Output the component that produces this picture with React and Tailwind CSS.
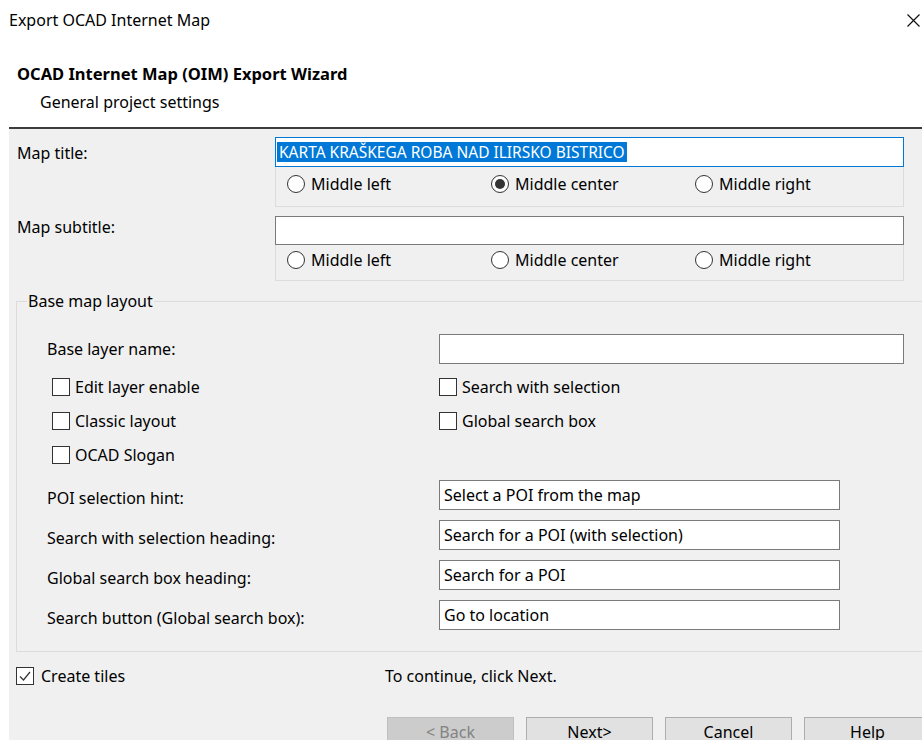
import React from 'react';

const Radio = ({ checked, label }) => (
  <div className="flex items-center gap-[6px] w-[204px]">
    <span className="w-[18px] h-[18px] rounded-full border border-[#333] bg-white flex items-center justify-center shrink-0">
      {checked && <span className="w-[10px] h-[10px] rounded-full bg-[#333]" />}
    </span>
    <span className="leading-[18px]">{label}</span>
  </div>
);

const Checkbox = ({ checked, label }) => (
  <div className="flex items-center gap-[5px]">
    <span className="w-[18px] h-[18px] border border-[#333] bg-white flex items-center justify-center shrink-0">
      {checked && (
        <svg width="14" height="14" viewBox="0 0 14 14">
          <path d="M2 7.5 L5.5 11 L12 3" fill="none" stroke="#333" strokeWidth="1.2" />
        </svg>
      )}
    </span>
    {label && <span className="leading-[18px]">{label}</span>}
  </div>
);

const TextBox = ({ value, className = '' }) => (
  <div className={`h-[30px] border border-[#7a7a7a] bg-white flex items-center pl-[4px] ${className}`}>
    {value}
  </div>
);

const RadioPanel = ({ selected, className = '' }) => (
  <div className={`border-x border-b border-[#dcdcdc] flex items-start pl-[11px] ${className}`}>
    <Radio label="Middle left" checked={selected === 'left'} />
    <Radio label="Middle center" checked={selected === 'center'} />
    <Radio label="Middle right" checked={selected === 'right'} />
  </div>
);

const Button = ({ children, disabled }) => (
  <div
    className={
      disabled
        ? 'w-[127px] h-[30px] border border-[#bfbfbf] bg-[#cccccc] text-[#838383] flex items-center justify-center shrink-0'
        : 'w-[127px] h-[30px] border border-[#adadad] bg-[#e1e1e1] flex items-center justify-center shrink-0'
    }
  >
    {children}
  </div>
);

const searchFields = [
  ['POI selection hint:', 'Select a POI from the map'],
  ['Search with selection heading:', 'Search for a POI (with selection)'],
  ['Global search box heading:', 'Search for a POI'],
  ['Search button (Global search box):', 'Go to location'],
];

export default function App() {
  return (
    <div className="w-[922px] h-[740px] overflow-hidden bg-white text-black text-[16px] font-['Noto_Sans',sans-serif]">
      {/* window header */}
      <div className="h-[127px]">
        <div className="h-[40px] flex items-center justify-between pl-[9px] pr-[2px]">
          <span>Export OCAD Internet Map</span>
          <svg width="13" height="13" viewBox="0 0 13 13">
            <path d="M0.5 0.5 L12.5 12.5 M12.5 0.5 L0.5 12.5" stroke="#111" strokeWidth="1.2" />
          </svg>
        </div>
        <div className="mt-[24px] pl-[17px] leading-[20px] font-bold text-[16.5px]">OCAD Internet Map (OIM) Export Wizard</div>
        <div className="mt-[8px] pl-[40px] leading-[20px]">General project settings</div>
      </div>

      <div className="ml-[9px] h-[613px] border-t-2 border-[#3c3c3c] bg-[#f0f0f0] pt-[8px]">
        {/* map title */}
        <div className="flex">
          <div className="w-[266px] pl-[8px] leading-[32px]">Map title:</div>
          <div className="w-[629px]">
            <div className="h-[30px] border border-[#0078d7] bg-white flex items-center pl-[1px] text-[15.5px]">
              <span className="bg-[#0078d7] text-white px-[2px] leading-[20px]">KARTA KRAŠKEGA ROBA NAD ILIRSKO BISTRICO</span>
            </div>
            <RadioPanel selected="center" className="h-[40px] pt-[8px]" />
          </div>
        </div>

        {/* map subtitle */}
        <div className="flex mt-[9px]">
          <div className="w-[266px] pl-[8px] leading-[22px]">Map subtitle:</div>
          <div className="w-[629px]">
            <div className="h-[29px] border border-[#7a7a7a] bg-white" />
            <RadioPanel className="h-[36px] pt-[6px]" />
          </div>
        </div>

        {/* base map layout group */}
        <fieldset className="ml-[7px] mt-[10px] w-[930px] border-l border-t border-b border-[#dcdcdc] pb-[21px]">
          <legend className="ml-[10px] px-[1px] leading-[20px]">Base map layout</legend>

          <div className="pl-[30px]">
            <div className="flex mt-[23px]">
              <div className="w-[392px] leading-[30px]">Base layer name:</div>
              <div className="w-[465px] h-[30px] border border-[#7a7a7a] bg-white" />
            </div>

            <div className="mt-[6px] flex">
              <div className="w-[392px] pl-[5px]">
                <div className="h-[34px] flex items-center"><Checkbox label="Edit layer enable" /></div>
                <div className="h-[34px] flex items-center"><Checkbox label="Classic layout" /></div>
                <div className="h-[34px] flex items-center"><Checkbox label="OCAD Slogan" /></div>
              </div>
              <div>
                <div className="h-[34px] flex items-center"><Checkbox label="Search with selection" /></div>
                <div className="h-[34px] flex items-center"><Checkbox label="Global search box" /></div>
              </div>
            </div>

            <div className="mt-[8px] flex flex-col gap-[10px]">
              {searchFields.map(([label, value]) => (
                <div key={label} className="flex">
                  <div className="w-[392px] h-[30px] pt-[3px] leading-[30px]">{label}</div>
                  <TextBox value={value} className="w-[401px]" />
                </div>
              ))}
            </div>
          </div>
        </fieldset>

        {/* footer */}
        <div className="mt-[7px] h-[34px] flex items-center pl-[7px]">
          <div className="w-[369px] flex items-center gap-[7px]">
            <Checkbox checked />
            <span>Create tiles</span>
          </div>
          <span>To continue, click Next.</span>
        </div>

        <div className="mt-[24px] ml-[378px] flex gap-[12px]">
          <Button disabled>&lt; Back</Button>
          <Button>Next&gt;</Button>
          <Button>Cancel</Button>
          <Button>Help</Button>
        </div>
      </div>
    </div>
  );
}
